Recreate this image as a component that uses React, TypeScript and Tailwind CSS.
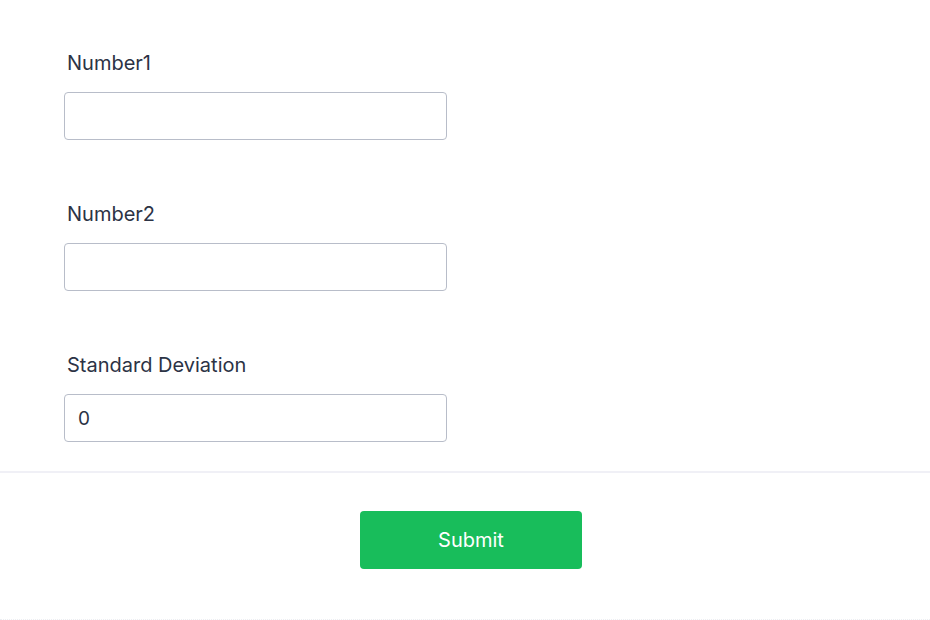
export default function App() {
  const fields = [
    { label: "Number1", value: "" },
    { label: "Number2", value: "" },
    { label: "Standard Deviation", value: "0" },
  ]

  return (
    <div className="w-[930px] h-[620px] bg-white font-['Inter',sans-serif] text-[#2c3345] flex flex-col">
      <div className="pt-[48px] pl-[64px] flex flex-col gap-[59px]">
        {fields.map((field) => (
          <div key={field.label} className="flex flex-col">
            <label className="pl-[3px] pt-[1px] text-[20px] leading-[28px] mb-[15px]">{field.label}</label>
            <input
              type="text"
              defaultValue={field.value}
              className="w-[383px] h-[48px] border border-[#b8bdc9] rounded-[4px] px-[13px] text-[19px] text-[#2c3345] outline-none"
            />
          </div>
        ))}
      </div>

      <div className="mt-[29px] h-[2px] bg-[#f0f0f6]" />

      <div className="flex justify-center pt-[38px] pl-[12px]">
        <button className="w-[222px] h-[58px] rounded-[4px] bg-[#18bd5b] text-white text-[20px]">
          Submit
        </button>
      </div>

      <div className="mt-auto border-b border-dotted border-[#eceef2]" />
    </div>
  )
}
